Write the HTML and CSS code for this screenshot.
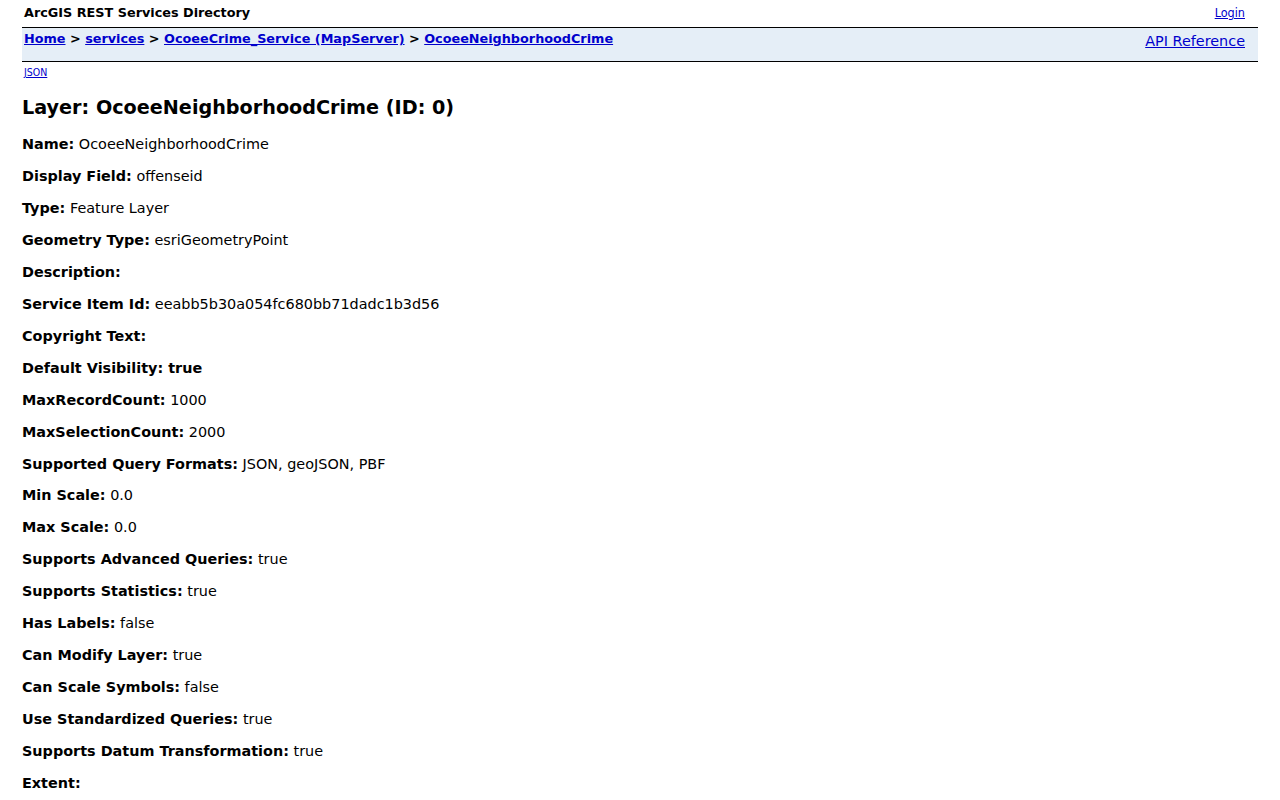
FILE: index.html
```html
<!DOCTYPE html>
<html lang="en">
<head>
<meta charset="utf-8">
<title>Layer: OcoeeNeighborhoodCrime (ID: 0)</title>
<link rel="stylesheet" href="styles.css">
</head>
<body>
<header class="user-bar">
  <span class="title-cell">ArcGIS REST Services Directory</span>
  <a class="login" href="#">Login</a>
</header>

<nav class="nav-bar">
  <div class="breadcrumbs">
    <a href="#">Home</a> &gt; <a href="#">services</a> &gt; <a href="#">OcoeeCrime_Service (MapServer)</a> &gt; <a href="#">OcoeeNeighborhoodCrime</a>
  </div>
  <a class="api-ref" href="#">API Reference</a>
</nav>

<div class="formats">
  <a href="#">JSON</a>
</div>

<main class="rbody">
  <h2>Layer: OcoeeNeighborhoodCrime (ID: 0)</h2>
  <dl class="props">
    <div class="prop"><dt>Name:</dt> <dd>OcoeeNeighborhoodCrime</dd></div>
    <div class="prop"><dt>Display Field:</dt> <dd>offenseid</dd></div>
    <div class="prop"><dt>Type:</dt> <dd>Feature Layer</dd></div>
    <div class="prop"><dt>Geometry Type:</dt> <dd>esriGeometryPoint</dd></div>
    <div class="prop"><dt>Description:</dt> <dd></dd></div>
    <div class="prop"><dt>Service Item Id:</dt> <dd>eeabb5b30a054fc680bb71dadc1b3d56</dd></div>
    <div class="prop"><dt>Copyright Text:</dt> <dd></dd></div>
    <div class="prop"><dt>Default Visibility: true</dt></div>
    <div class="prop"><dt>MaxRecordCount:</dt> <dd>1000</dd></div>
    <div class="prop"><dt>MaxSelectionCount:</dt> <dd>2000</dd></div>
    <div class="prop"><dt>Supported Query Formats:</dt> <dd>JSON, geoJSON, PBF</dd></div>
    <div class="prop"><dt>Min Scale:</dt> <dd>0.0</dd></div>
    <div class="prop"><dt>Max Scale:</dt> <dd>0.0</dd></div>
    <div class="prop"><dt>Supports Advanced Queries:</dt> <dd>true</dd></div>
    <div class="prop"><dt>Supports Statistics:</dt> <dd>true</dd></div>
    <div class="prop"><dt>Has Labels:</dt> <dd>false</dd></div>
    <div class="prop"><dt>Can Modify Layer:</dt> <dd>true</dd></div>
    <div class="prop"><dt>Can Scale Symbols:</dt> <dd>false</dd></div>
    <div class="prop"><dt>Use Standardized Queries:</dt> <dd>true</dd></div>
    <div class="prop"><dt>Supports Datum Transformation:</dt> <dd>true</dd></div>
    <div class="prop"><dt>Extent:</dt> <dd></dd></div>
  </dl>
</main>
</body>
</html>
```

FILE: styles.css
```css
html, body {
  margin: 0;
  padding: 0;
}

body {
  font-family: "DejaVu Sans", Verdana, sans-serif;
  color: #000;
  background: #fff;
}

a {
  color: #0000cc;
}

/* top strip: product title + login */
.user-bar {
  display: flex;
  justify-content: space-between;
  align-items: center;
  margin: 0 35px 0 24px;
  height: 25px;
  padding-bottom: 1px;
}

.title-cell {
  font-weight: bold;
  font-size: 12.8px;
}

.login {
  font-family: "DejaVu Sans Condensed", "DejaVu Sans", sans-serif;
  font-stretch: condensed;
  font-size: 12.5px;
}

/* breadcrumb band */
.nav-bar {
  display: flex;
  justify-content: space-between;
  align-items: flex-start;
  margin: 1px 22px 0;
  height: 33px;
  background: #e5eef7;
  border-top: 1px solid #000;
  border-bottom: 1px solid #000;
  padding: 0 13px 0 2px;
}

.breadcrumbs {
  font-weight: bold;
  font-size: 12.8px;
  padding-top: 3px;
}

.api-ref {
  font-size: 14.4px;
  padding-top: 5px;
}

/* alternate formats */
.formats {
  margin: 2px 24px 0;
  height: 14px;
  line-height: 14px;
}

.formats a {
  font-family: "DejaVu Sans Condensed", "DejaVu Sans", sans-serif;
  font-stretch: condensed;
  font-size: 10.5px;
}

/* layer properties */
.rbody {
  margin: 0 22px;
  font-size: 14.4px;
  line-height: 16px;
}

.rbody h2 {
  font-size: 19.2px;
  line-height: 22px;
  margin: 19px 0 17px;
}

.props {
  margin: 0;
  display: flex;
  flex-direction: column;
  gap: 15.966px;
}

.prop dt,
.prop dd {
  display: inline;
  margin: 0;
}

.prop dt {
  font-weight: bold;
}
```
